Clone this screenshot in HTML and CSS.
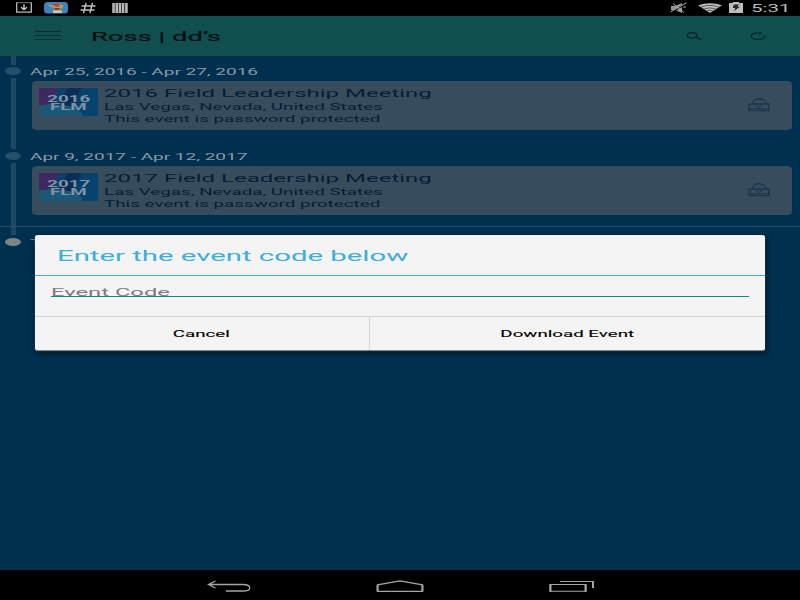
FILE: index.html
```
<!DOCTYPE html>
<html lang="en">
<head>
<meta charset="utf-8">
<title>Ross | dd’s</title>
<link rel="stylesheet" href="styles.css">
</head>
<body>
<div class="screen">
  <header class="status">
    <div class="status-left">
      <svg width="16" height="12" viewBox="0 0 16 12"><path d="M.7 .5V10.2H15.3V.5" fill="none" stroke="#bbb" stroke-width="1.3"/><path d="M0 .7H16" stroke="#999" stroke-width=".8"/><path d="M8 2.5V7M5 5.3L8 7.6L11 5.3" fill="none" stroke="#ccc" stroke-width="1.4"/></svg>
      <svg class="app-icon" width="24" height="12" viewBox="0 0 24 12"><rect width="24" height="11.5" rx="3.5" fill="#3f82bd"/><path d="M4 2L10 4L12 1L16 2L20 4L17 7H15L17 10H9L11 6L6 5Z" fill="#b59a55"/><path d="M9 2L14 1L16 4L12 5Z" fill="#b54432"/><path d="M10 6H16L15 8H11Z" fill="#943d37"/><path d="M9 8.5H18V11H9Z" fill="#c6c6b8"/></svg>
      <svg class="hash" width="16" height="12" viewBox="0 0 16 12"><path d="M6 1L3.5 11M12.5 1L10 11M1.5 4H15.5M.5 8H14.5" fill="none" stroke="#bbb" stroke-width="1.5"/></svg>
      <svg class="bars" width="16" height="10" viewBox="0 0 16 10"><path d="M1.5 0V10M4.7 0V10M7.9 0V10M11.1 0V10M14.4 0V10" stroke="#b5b5b5" stroke-width="2.6"/></svg>
    </div>
    <div class="status-right">
      <svg width="18" height="12" viewBox="0 0 18 12"><path d="M1 4H5L12 1V11L5 8H1Z" fill="#999"/><path d="M1 10.5L16 1.3" stroke="#000" stroke-width="2"/><path d="M.5 10L16.5 .8M3 1.5L14 10.5M13 5H16" stroke="#aaa" stroke-width="1"/></svg>
      <svg class="wifi" width="24" height="11" viewBox="0 0 24 11"><path d="M0 2.2Q12-1.8 24 2.2L12 10Z" fill="#bbb"/><path d="M3 4Q12 .8 21 4M6 6Q12 3.8 18 6M9 7.8Q12 6.9 15 7.8" fill="none" stroke="#222" stroke-width=".6"/></svg>
      <svg class="battery" width="14" height="11" viewBox="0 0 14 11"><path d="M0 1H4V0H10V1H14V11H0Z" fill="#bdbdbd"/><path d="M5 2.5H10L8.3 4.8H11L5 9L6.3 6H3.7Z" fill="#252525"/></svg>
      <span class="clock"><span class="wide">5:31</span></span>
    </div>
  </header>
  <div class="toolbar">
    <div class="menu"><i></i><i></i><i></i></div>
    <h1><span class="wide">Ross | dd’s</span></h1>
    <svg class="search" width="16" height="9" viewBox="0 0 16 9"><ellipse cx="6" cy="3.3" rx="4.8" ry="2.7" fill="none" stroke="#042628" stroke-width="1.2"/><path d="M9.5 5L15.3 7.6" stroke="#042628" stroke-width="1.4"/></svg>
    <svg class="refresh" width="17" height="9" viewBox="0 0 17 9"><path d="M7 1.2C3.5 1.4 1.1 2.4 1.1 4.3C1.1 8.6 14.6 8.6 15 3.8" fill="none" stroke="#042628" stroke-width="1.2"/><path d="M6 1.3L10 .8M8.5 0L12 .9L9.5 2.6Z" fill="#042628" stroke="#042628" stroke-width=".5"/></svg>
  </div>
  <main>
    <section class="event">
      <div class="rail"><i class="stem"></i><i class="dot"></i><i class="stem long"></i></div>
      <div class="entry">
        <h2><span class="wide">Apr 25, 2016 - Apr 27, 2016</span></h2>
        <article class="card">
          <div class="thumb"><span class="wide">2016</span><span class="wide">FLM</span></div>
          <div class="info">
            <h3><span class="wide">2016 Field Leadership Meeting</span></h3>
            <p><span class="wide">Las Vegas, Nevada, United States</span></p>
            <p><span class="wide">This event is password protected</span></p>
          </div>
          <svg class="lock" width="22" height="14" viewBox="0 0 22 14"><g fill="none" stroke="#1c364b"><path d="M1 6H21V12.5H1Z" stroke-width="1.4"/><path d="M4.5 6C4.5-1 17.5-1 17.5 6" stroke-width="1.3"/><path d="M1 10.7H21" stroke-width=".8"/><path d="M8 7.2Q11 5.5 14 7.2Q13.5 8.5 11 9.6Q8.5 8.5 8 7.2Z" stroke-width="1"/></g></svg>
        </article>
      </div>
    </section>
    <section class="event">
      <div class="rail"><i class="stem"></i><i class="dot"></i><i class="stem long"></i></div>
      <div class="entry">
        <h2><span class="wide">Apr 9, 2017 - Apr 12, 2017</span></h2>
        <article class="card">
          <div class="thumb"><span class="wide">2017</span><span class="wide">FLM</span></div>
          <div class="info">
            <h3><span class="wide">2017 Field Leadership Meeting</span></h3>
            <p><span class="wide">Las Vegas, Nevada, United States</span></p>
            <p><span class="wide">This event is password protected</span></p>
          </div>
          <svg class="lock" width="22" height="14" viewBox="0 0 22 14"><g fill="none" stroke="#1c364b"><path d="M1 6H21V12.5H1Z" stroke-width="1.4"/><path d="M4.5 6C4.5-1 17.5-1 17.5 6" stroke-width="1.3"/><path d="M1 10.7H21" stroke-width=".8"/><path d="M8 7.2Q11 5.5 14 7.2Q13.5 8.5 11 9.6Q8.5 8.5 8 7.2Z" stroke-width="1"/></g></svg>
        </article>
      </div>
    </section>
    <section class="event today">
      <div class="rail"><i class="stem"></i><i class="dot"></i></div>
      <div class="entry"><h2><span class="wide">T</span></h2></div>
    </section>
  </main>
  <nav>
    <svg width="44" height="13" viewBox="0 0 44 13"><path d="M1.5 4.5H36C45 4.5 45 11 36 11H19M8.5 1L1.5 4.5L8.5 8" fill="none" stroke="#a5a5a5" stroke-width="1.3"/></svg>
    <svg width="48" height="13" viewBox="0 0 48 13"><path d="M1.7 11.3V4.8L24 .9L46.3 4.8V11.3Z" fill="none" stroke="#a5a5a5" stroke-width="1.2"/><path d="M1.5 4.8V11.5M46.5 4.8V11.5" stroke="#a5a5a5" stroke-width="2"/></svg>
    <svg width="46" height="13" viewBox="0 0 46 13"><path d="M1 4.5H37V11.3H1Z M11 1.5H44" fill="none" stroke="#a5a5a5" stroke-width="1.1"/><path d="M1.5 4V11.8M36.5 4V11.8M44 1V8" stroke="#a5a5a5" stroke-width="2"/></svg>
  </nav>
  <form class="dialog">
    <h2><span class="wide">Enter the event code below</span></h2>
    <div class="body"><div class="field"><span class="wide">Event Code</span></div></div>
    <div class="actions">
      <button type="button"><span class="wide">Cancel</span></button>
      <button type="button"><span class="wide">Download Event</span></button>
    </div>
  </form>
</div>
</body>
</html>
```
FILE: styles.css
```
* { box-sizing: border-box; }
body { margin: 0; }
h1, h2, h3, p { margin: 0; font-weight: 400; white-space: nowrap; }
svg { display: block; flex: none; }

.screen {
  position: relative;
  width: 800px;
  height: 600px;
  overflow: hidden;
  display: flex;
  flex-direction: column;
  background: #00304f;
  font-family: Roboto, sans-serif;
}
.wide {
  display: inline-block;
  transform: scaleX(2.133);
  transform-origin: left center;
}

.status {
  height: 16px;
  background: #000;
  display: flex;
  justify-content: space-between;
  padding: 2px 9px 0 16px;
}
.status-left, .status-right { display: flex; }
.app-icon { margin-left: 12px; }
.hash { margin-left: 12px; }
.bars { margin: 1px 0 0 16px; }
.wifi { margin: 1px 0 0 10px; }
.battery { margin-left: 7px; }
.clock { width: 40px; margin-left: 8px; font-size: 10px; line-height: 14px; color: #bbb; }
.clock .wide { transform: scaleX(2.05); }

.toolbar {
  height: 40px;
  background: #114e4e;
  display: flex;
  align-items: center;
}
.menu { width: 26px; margin: 0 0 1px 35px; display: grid; gap: 3px; }
.menu i { height: 1px; background: #062f31; }
.toolbar h1 {
  flex: 1;
  margin-left: 30px;
  padding-top: 1px;
  font-size: 12.5px;
  line-height: 16px;
  color: #000f10;
  -webkit-text-stroke: .15px #000f10;
}
.toolbar h1 .wide { transform: scaleX(2.19); }
.search { margin-right: 48px; }
.refresh { margin-right: 33px; }

main { flex: 1; }
.event { display: flex; height: 85px; }
.rail { width: 30px; padding-left: 5px; display: flex; flex-direction: column; }
.stem { width: 5px; height: 9px; margin-left: 6px; background: #1c4765; }
.event + .event .stem:first-child { height: 8px; }
.stem.long { height: auto; flex: 1; }
.dot { width: 16px; height: 8px; margin: 2px 0 3px; border-radius: 50%; background: #23506a; }
.event + .event .dot { margin-top: 3px; }
.entry { flex: 1; min-width: 0; padding-top: 10px; }
.entry h2 { height: 15px; font-size: 8.75px; line-height: 12px; color: #8d9aa4; }
.entry h2 .wide { transform: scaleX(2.17); }
.card {
  width: 760px;
  height: 49px;
  margin-left: 2px;
  padding: 4px 22px 0 7px;
  display: flex;
  border-radius: 5px / 3px;
  background: #374d5e;
}
.thumb {
  width: 59px;
  height: 28px;
  margin-top: 3px;
  padding-top: 7px;
  display: flex;
  flex-direction: column;
  align-items: center;
  background:
    radial-gradient(ellipse 30px 12px at 14px 28px, #1b5878 96%, transparent),
    linear-gradient(118deg, #3e2862 26%, #0f3f68 28% 38%, #0c2d58 39% 56%, #07416c 60%, #064570);
  color: #8095a4;
  font-size: 8.5px;
  font-weight: 700;
  line-height: 8px;
}
.thumb .wide { transform: scaleX(2.2); transform-origin: center; }
.info { flex: 1; margin-left: 6px; color: #061d34; }
.info h3 { height: 15px; font-size: 11.25px; line-height: 17px; }
.info p { height: 12px; font-size: 8.75px; line-height: 14px; }
.info p .wide { transform: scaleX(2.15); }
.lock { margin-top: 13px; }
.today { border-top: 1px solid #2b4d63; }
.today .dot { background: #7d8587; }

nav {
  height: 30px;
  background: #000;
  display: flex;
  justify-content: space-between;
  padding: 9.5px 205px 0 207px;
}

.dialog {
  position: absolute;
  left: 35px;
  top: 235px;
  width: 730px;
  height: 115px;
  border-radius: 3px / 2px;
  background: #f4f4f4;
  box-shadow: 0 1px 1px #82949f, 1px 3px 6px #001321;
}
.dialog h2 {
  height: 41px;
  padding-left: 21.5px;
  border-bottom: 1px solid #3fb0d6;
  font-size: 13.75px;
  line-height: 42px;
  color: #3daedb;
}
.dialog .body { height: 40px; padding: 8px 16px 0; }
.field {
  height: 13px;
  border-bottom: 1px solid #168887;
  font-size: 11.25px;
  line-height: 18px;
  color: #7c7c7c;
}
.field .wide { transform: scaleX(2.11); }
.actions { height: 34px; display: flex; border-top: 1px solid #d5d5d5; }
.actions button {
  flex: 1;
  border: 0;
  padding: 2px 0 0;
  background: none;
  font: 400 8.75px/31px Roboto, sans-serif;
  color: #000;
  -webkit-text-stroke: .1px #000;
}
.actions button:first-child { flex: 0 0 335px; padding-right: 2px; border-right: 1px solid #d5d5d5; }
.actions .wide { transform: scaleX(2.14); transform-origin: center; }
```
